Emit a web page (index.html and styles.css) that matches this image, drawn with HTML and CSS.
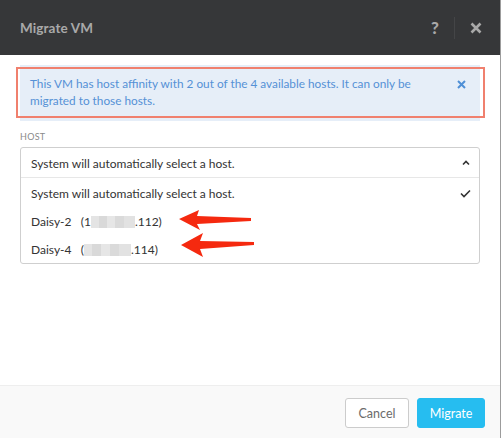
FILE: index.html
```html
<!DOCTYPE html>
<html>
<head>
<meta charset="utf-8">
<link rel="stylesheet" href="styles.css">
</head>
<body>
<div class="dialog">
  <header class="head">
    <h1 class="title">Migrate VM</h1>
    <div class="head-actions">
      <span class="help">?</span>
      <span class="sep"></span>
      <svg class="close" width="12" height="12" viewBox="0 0 12 12"><path d="M1.5 1.5 L10.5 10.5 M10.5 1.5 L1.5 10.5" stroke="#a9a9a9" stroke-width="2.6" stroke-linecap="butt"/></svg>
    </div>
  </header>
  <main class="body">
    <div class="alert">
      <p class="alert-text">This VM has host affinity with 2 out of the 4 available hosts. It can only be migrated to those hosts.</p>
      <svg class="alert-close" width="9" height="9" viewBox="0 0 9 9"><path d="M1 1 L8 8 M8 1 L1 8" stroke="#4f8fd6" stroke-width="2"/></svg>
      <span class="annot-box"></span>
    </div>
    <div class="label">HOST</div>
    <div class="select">
      <div class="toggle">
        <span>System will automatically select a host.</span>
        <svg width="8" height="6" viewBox="0 0 8 6"><path d="M1 4.5 L4 1.5 L7 4.5" stroke="#333" stroke-width="1.6" fill="none"/></svg>
      </div>
      <ul class="options">
        <li class="opt">
          <span>System will automatically select a host.</span>
          <svg width="11" height="9" viewBox="0 0 11 9"><path d="M1 4.5 L4 7.5 L10 1.5" stroke="#333" stroke-width="1.6" fill="none"/></svg>
        </li>
        <li class="opt"><span>Daisy-2&nbsp;&nbsp;&nbsp;(1<span class="blur b1"></span>.112)</span></li>
        <li class="opt"><span>Daisy-4&nbsp;&nbsp;&nbsp;(<span class="blur b2"></span>.114)</span></li>
      </ul>
      <svg class="arrow a1" width="80" height="24" viewBox="0 0 80 24"><path d="M1 10 L21 1 L19 7 L73 9 L73 12 L19 15 L22 21 Z" fill="#f5290f"/></svg>
      <svg class="arrow a2" width="80" height="26" viewBox="0 0 80 26"><path d="M1 13 L23 1 L20 9 L74 10 L74 13 L20 17 L23 25 Z" fill="#f5290f"/></svg>
    </div>
  </main>
  <footer class="foot">
    <button class="btn btn-cancel">Cancel</button>
    <button class="btn btn-primary">Migrate</button>
  </footer>
</div>
</body>
</html>
```
FILE: styles.css
```css
html { background: #9c9c9c; }
body {
  margin: 0;
  font-family: Lato, "Open Sans", "Liberation Sans", sans-serif;
  color: #333;
}
.dialog {
  width: 500px;
  height: 438px;
  background: #fff;
  display: flex;
  flex-direction: column;
}
.head {
  height: 55px;
  flex: none;
  background: #363739;
  display: flex;
  align-items: center;
  justify-content: space-between;
  padding: 0 15px 0 20px;
  box-sizing: border-box;
}
.title {
  margin: 0;
  font-size: 13.5px;
  font-weight: 700;
  color: #a9a9a9;
  letter-spacing: 0.1px;
}
.head-actions {
  display: flex;
  align-items: center;
}
.help {
  font-size: 17px;
  font-weight: 900;
  color: #a9a9a9;
  width: 12px;
  text-align: center;
}
.sep {
  width: 1px;
  height: 22px;
  background: #444547;
  margin: 0 15px 0 13px;
}
.close { display: block; margin-right: 3px; }
.body {
  flex: 1;
  padding: 10px 20px 0;
}
.alert {
  position: relative;
  background: #e6eef8;
  height: 56px;
  box-sizing: border-box;
  padding: 10px 50px 0 10px;
}
.alert-text {
  margin: 0;
  font-size: 11.8px;
  line-height: 17px;
  color: #5591d6;
}
.alert-close {
  position: absolute;
  right: 14px;
  top: 15px;
}
.annot-box {
  position: absolute;
  left: -4px;
  right: -5px;
  top: 2px;
  bottom: 3px;
  border: 2px solid #f0806e;
}
.label {
  margin-top: 10px;
  font-size: 9px;
  line-height: 12px;
  color: #8a8a8a;
  letter-spacing: 0.3px;
}
.select {
  position: relative;
  margin-top: 4px;
  border: 1px solid #cfcfcf;
  border-radius: 3px;
}
.toggle {
  height: 28px;
  border-bottom: 1px solid #e7e7e7;
  display: flex;
  align-items: center;
  justify-content: space-between;
  padding: 1px 9px 0 10px;
  box-sizing: content-box;
  font-size: 12px;
}
.options {
  list-style: none;
  margin: 0;
  padding: 0 0 0;
}
.opt {
  height: 28px;
  display: flex;
  align-items: center;
  justify-content: space-between;
  padding: 0 8px 0 10px;
  font-size: 12px;
}
.opt:first-child { margin-top: 1px; }
.blur {
  display: inline-block;
  vertical-align: -2px;
  height: 12px;
  background:
    linear-gradient(90deg, #e4e4e4 0 18%, #d9d9d9 18% 36%, #e6e6e6 36% 55%, #dadada 55% 74%, #e2e2e2 74% 100%);
  filter: blur(0.6px);
}
.b1 { width: 44px; }
.b2 { width: 47px; }
.arrow { position: absolute; }
.a1 { left: 157px; top: 61px; }
.a2 { left: 159px; top: 84px; }
.foot {
  height: 53px;
  flex: none;
  box-sizing: border-box;
  background: #f9f9f9;
  border-top: 1px solid #eeeeee;
  display: flex;
  justify-content: flex-end;
  align-items: flex-start;
  gap: 8px;
  padding: 12px 15px 0;
}
.btn {
  height: 30px;
  border-radius: 3px;
  font-family: Lato, "Open Sans", "Liberation Sans", sans-serif;
  font-size: 12.5px;
  padding: 0;
}
.btn-cancel {
  width: 64px;
  background: #fff;
  border: 1px solid #cccccc;
  color: #6b6b6b;
}
.btn-primary {
  width: 68px;
  background: #26bdf0;
  border: 1px solid #26bdf0;
  color: #fff;
}
```
